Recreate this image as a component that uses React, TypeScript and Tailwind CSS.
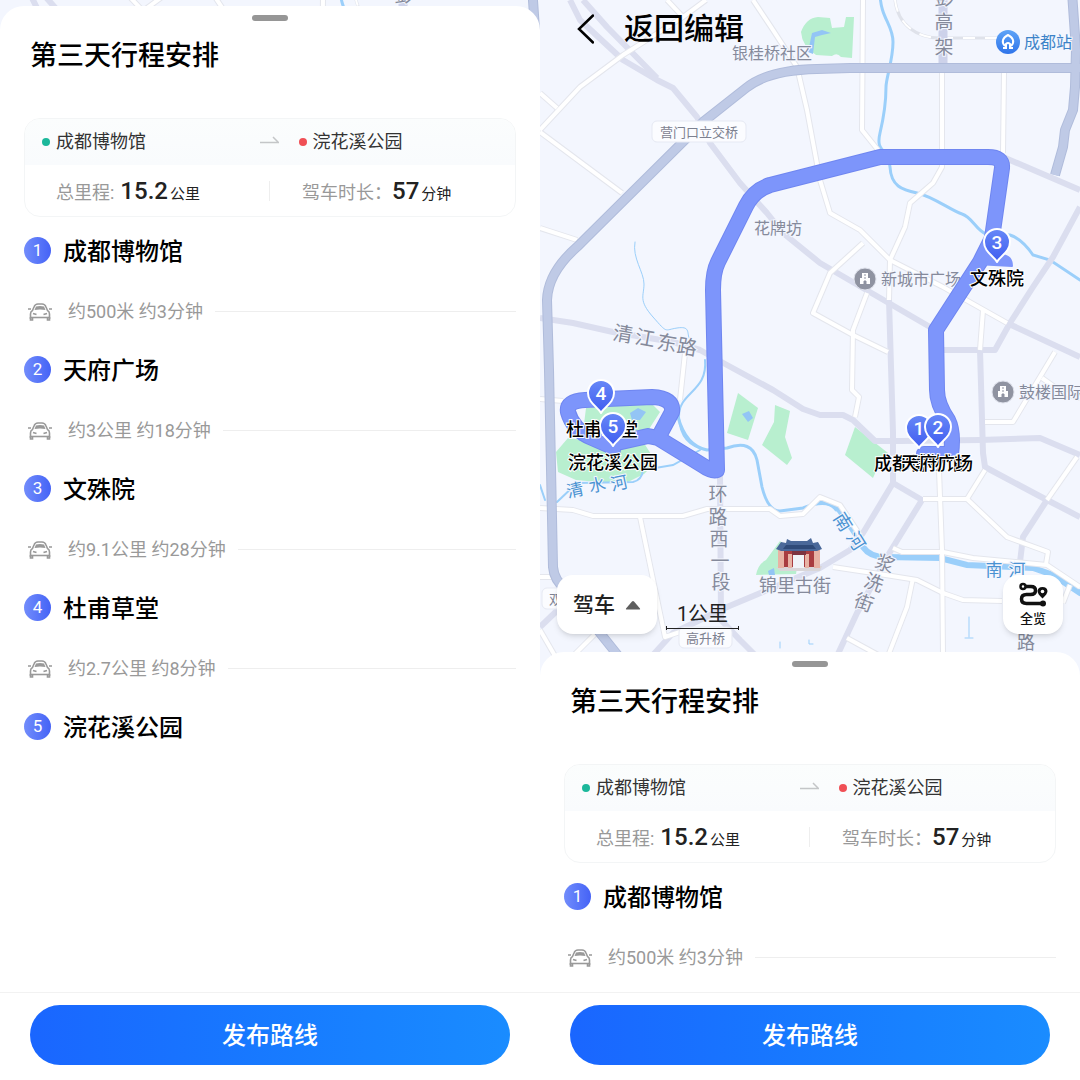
import { useState } from 'react';

type TGlyph = [char: string, x: number, y: number];

const stops = [
    { name: '成都博物馆', leg: '约500米 约3分钟' },
    { name: '天府广场', leg: '约3公里 约18分钟' },
    { name: '文殊院', leg: '约9.1公里 约28分钟' },
    { name: '杜甫草堂', leg: '约2.7公里 约8分钟' },
    { name: '浣花溪公园', leg: '' },
];

const parks = [
    'M261 32Q266 18 278 17L290 18 292 28 304 27 306 17 314 17 312 58 301 57Q297 52 292 56L276 55Q262 46 261 32Z',
    'M198 393L218 408 208 440 187 433Z',
    'M235 405L250 411 245 437 249 449 252 458 247 465 222 445 234 422Z',
    'M315 427L348 453 340 462 333 478 305 455Z',
    'M240 541L258 560 256 574 216 575Q218 564 226 560Z',
    'M46 408L70 404 112 404 120 412 102 440 116 462 104 474 84 484 58 482 36 480 18 472 16 452 28 438 42 440Z',
];

const ponds = [
    'M272 33L282 30 291 33 282 35 275 37 273 54 268 52Z',
    'M202 414L209 411 213 418 208 422 205 418Z',
    'M90 413L98 408 106 412 100 420 92 420Z',
    'M36 424L54 428 50 444 38 440Z',
    'M228 571L234 568 235 575 229 575Z',
];

const lavenderRoads = [
    'M30 0L40 20 83 60 117 80 133 88 157 117 170 143 200 183 227 213 243 233 280 263 347 302 390 327',
    'M43 0L67 27 117 78',
    'M0 318L33 323 73 332 133 342 160 350 187 365 233 390 263 409 280 415 303 415 313 420 335 441 360 441 440 440 500 438 540 455',
    'M349 300L353 433 353 483 323 533 310 550 280 568 187 607 133 633 112 656',
    'M353 483L382 500 350 552 317 613 297 656',
    'M403 350L455 350 470 323 493 287 513 257 540 207',
    'M463 157L540 190',
    'M440 350L443 453 445 467 507 500 540 517',
    'M507 500L483 537 480 562',
    'M467 323L540 357',
    'M180 473L181 620 200 640 216 656',
    'M0 627L24 604',
];

const whiteRoads = [
    'M0 130L40 87 83 55 143 17 166 0',
    'M127 0L143 17',
    'M213 0L233 30 257 67 267 110 280 180 290 213 320 230 350 260 403 287 467 323',
    'M0 93L17 108',
    'M0 132L82 193',
    'M0 228L37 240',
    'M323 0L322 130 338 150',
    'M323 243L290 273 273 313 313 335 348 352',
    'M402 72L402 167 393 183 370 203 365 227 350 260 349 300',
    'M464 72L463 153',
    'M327 293L313 330 312 390 319 397 315 417',
    'M443 310L440 350',
    'M515 352L473 422 445 422',
    'M502 378L523 393 540 398',
    'M0 399L23 401',
    'M145 353L140 400',
    'M0 508L33 510 53 516 143 516 167 509 230 509 240 516 263 514 280 497 300 505 320 535',
    'M100 517L125 637 140 632',
    'M0 577L14 577',
    'M0 630L15 656',
    'M33 656L57 632',
    'M383 499L427 499 445 470',
    'M427 499L467 537 508 552 506 564',
    'M399 470L402 550 403 656',
    'M353 548L362 552 403 552 433 558 507 565 540 587',
    'M293 567L333 573 377 580 403 593 423 600 462 601',
    'M373 578L367 607 348 656',
    'M307 638L340 656',
    'M507 500L537 457',
    'M530 585L523 603',
];

const rivers = [
    { d: 'M340 -8C340 18 353 24 353 42S346 78 346 87S345 112 340 133S349 148 350 167S362 190 377 193S412 211 422 214S436 230 446 234L470 235Q482 239 493 255L510 260 540 280', w: 3 },
    { d: 'M95 242C92 258 104 272 104 284S98 300 113 317S124 330 137 328S147 332 149 338', w: 1 },
    { d: 'M165 360C168 392 138 392 139 417S155 448 167 450', w: 2 },
    { d: 'M138 417Q146 446 167 450L187 448Q212 439 217 460L222 487Q228 511 240 511L263 508Q288 498 296 510', w: 3 },
    { d: 'M280 502Q294 502 301 514L323 547', w: 4 },
    { d: 'M323 547Q330 557 345 557L400 558 427 565 493 568 513 575 540 593', w: 6 },
    { d: 'M0 485L5 500', w: 2 },
    { d: 'M17 502L37 483 93 482Q102 480 103 470L133 465 160 450', w: 2 },
    { d: 'M429 617V637M425 638H433', w: 1 },
    { d: 'M240 642V648M269 640V644H273', w: 1 },
];

const ringRoads = [
    'M540 68L310 68 277 69Q228 70 206 88L163 122 47 237 38 246Q8 272 7 300L9 370 13 567Q14 580 26 590L60 633 80 658',
    'M532 -8L536 50 535 87 533 110 525 130 523 147 515 175',
];

const route =
    'M384 454L411 454Q414 432 408 420Q397 404 397 390L396 330L440 262L452 238L462 168Q463 157 448 157L340 157L230 185Q214 190 206 206L178 262Q173 272 173 290L177 470Q172 472 162 465L118 438L132 412Q134 398 112 397L45 400Q26 401 28 412Q33 430 52 438L68 445L108 436L118 438M73 444L73 450';

const MapLabel = ({
    glyphs,
    size = 16,
    angle = 0,
    water = false,
}: {
    glyphs: TGlyph[];
    size?: number;
    angle?: number;
    water?: boolean;
}) => (
    <g
        fontSize={size}
        textAnchor="middle"
        dominantBaseline="central"
        fill={water ? '#4a92d2' : '#858a9b'}
        stroke="#f3f6fe"
        strokeWidth="2"
        paintOrder="stroke"
    >
        {glyphs.map(([char, x, y]) => (
            <text key={char} x={x} y={y} transform={`rotate(${angle} ${x} ${y})`}>
                {char}
            </text>
        ))}
    </g>
);

const MapBadge = ({ x, y, width, label }: { x: number; y: number; width: number; label: string }) => (
    <g>
        <rect x={x} y={y} width={width} height="21" rx="5" fill="#fbfcff" stroke="#e6e9f3" />
        <text x={x + width / 2} y={y + 16} fontSize="13" textAnchor="middle" fill="#7d8190">
            {label}
        </text>
    </g>
);

const Pin = ({ x, y, n }: { x: number; y: number; n: number }) => (
    <g transform={`translate(${x} ${y})`}>
        <path
            d="M0 19C-3 13 -13 9 -13 -1A13 13 0 0 1 13 -1C13 9 3 13 0 19Z"
            fill="url(#pinFill)"
            stroke="#fff"
            strokeWidth="2"
            strokeLinejoin="round"
        />
        <text y="6" fontSize="19" fontWeight="500" textAnchor="middle" fill="#fff">
            {n}
        </text>
    </g>
);

const Building = ({ x, y }: { x: number; y: number }) => (
    <g transform={`translate(${x} ${y})`}>
        <circle r="11" fill="#8f93a1" stroke="#dfe2ec" />
        <path d="M-3 -6H3V-1H5V5H-5V-1H-3Z" fill="#fff" />
        <path d="M-1 -4H1M-1 -1H1M-1 5V2H1V5" stroke="#8f93a1" fill="#8f93a1" />
    </g>
);

// 锦里牌坊
const Gate = () => (
    <g>
        <path d="M236 567L282 566 280 571 240 571Z" fill="#d9d6d8" />
        <path d="M240 549H278V567H240Z" fill="#a93d40" />
        <path d="M253 555H264V568H253Z" fill="#f0f4f8" />
        <path d="M238 550H244V568H238ZM248 554H252V568H248ZM265 554H269V568H265ZM274 550H280V568H274Z" fill="#e8b3a4" />
        <path d="M236 549L241 542 246 543 247 539 251 541H267L271 538 273 543 278 542 282 549 277 551H241Z" fill="#4a6899" />
        <path d="M246 545H273L276 549H243Z" fill="#2f4a78" />
        <path d="M252 551H266V555H252Z" fill="#7d3440" />
    </g>
);

const MapPlaces = () => (
    <g>
        <MapLabel size={20} angle={10} glyphs={[['清', 83, 334], ['江', 105, 338], ['东', 127, 343], ['路', 147, 347]]} />
        <MapLabel size={19} glyphs={[['环', 178, 494], ['路', 178, 517], ['西', 179, 539], ['一', 180, 561], ['段', 181, 582]]} />
        <MapLabel size={19} angle={20} glyphs={[['浆', 345, 564], ['洗', 334, 583], ['街', 324, 603]]} />
        <MapLabel size={17} angle={-12} water glyphs={[['清', 35, 490], ['水', 57, 485], ['河', 79, 483]]} />
        <MapLabel size={18} angle={58} water glyphs={[['南', 303, 522], ['河', 316, 541]]} />
        <MapLabel size={17} water glyphs={[['南', 454, 570], ['河', 477, 570]]} />
        <MapLabel size={18} glyphs={[['路', 486, 642]]} />
        <g fontSize="16" fill="#858a9b" stroke="#f3f6fe" strokeWidth="2" paintOrder="stroke">
            <text x="192" y="59">银桂桥社区</text>
            <text x="214" y="234">花牌坊</text>
            <text x="341" y="285">新城市广场</text>
            <text x="479" y="398">鼓楼国际</text>
            <text x="219" y="592" fontSize="18">锦里古街</text>
            <text x="484" y="48" fill="#3c83c8">成都站</text>
        </g>
        <MapBadge x={112} y={121} width={94} label="营门口立交桥" />
        <MapBadge x={2} y={588} width={40} label="双楠" />
        <MapBadge x={139} y={627} width={53} label="高升桥" />
        <Building x={325} y={279} />
        <Building x={463} y={392} />
        <g transform="translate(468 42)">
            <circle r="12" fill="url(#stationFill)" />
            <path d="M-3 4Q-6 1 -5 -2Q-4 -5 0 -7Q4 -5 5 -2Q6 1 3 4M-5 6H-2V2Q0 0 2 2V6H5" fill="none" stroke="#fff" strokeWidth="2" />
        </g>
        <Gate />

        <path d={route} fill="none" stroke="#6f86f0" strokeWidth="16" strokeLinecap="round" strokeLinejoin="round" />
        <path d="M436 264L446 240 462 255Q472 256 472 266Z" fill="#7d95fb" stroke="#7d95fb" strokeWidth="2" strokeLinejoin="round" />
        <path d={route} fill="none" stroke="#7d95fb" strokeWidth="14" strokeLinecap="round" strokeLinejoin="round" />

        <g fontSize="18" fontWeight="500" fill="#000" stroke="#fff" strokeWidth="2" paintOrder="stroke">
            <text x="26" y="436">杜甫草堂</text>
            <text x="28" y="469">浣花溪公园</text>
            <text x="430" y="285">文殊院</text>
            <text x="334" y="470">成都博物馆</text>
            <text x="361" y="470">天府广场</text>
        </g>
        <Pin x={61} y={394} n={4} />
        <Pin x={73} y={427} n={5} />
        <Pin x={457} y={243} n={3} />
        <Pin x={379} y={429} n={1} />
        <Pin x={398} y={428} n={2} />
    </g>
);

const RouteMap = ({ top = 0, showPlaces = false }: { top?: number; showPlaces?: boolean }) => (
    <svg
        className="absolute inset-0 w-full h-full"
        viewBox={`0 ${top} 540 ${showPlaces ? 676 : 30}`}
        preserveAspectRatio="xMidYMin slice"
        aria-label="行程地图"
    >
        <defs>
            <linearGradient id="pinFill" x1="0" y1="0" x2="0" y2="1">
                <stop offset="0" stopColor="#6788f7" />
                <stop offset="1" stopColor="#3f5cf0" />
            </linearGradient>
            <linearGradient id="stationFill" x1="0" y1="0" x2="0" y2="1">
                <stop offset="0" stopColor="#5fa4f7" />
                <stop offset="1" stopColor="#2f74ea" />
            </linearGradient>
        </defs>
        <rect y="-10" width="540" height="700" fill="#f3f6fe" />
        <g fill="#b8efcf">
            {parks.map((d) => (
                <path key={d} d={d} />
            ))}
        </g>
        <g fill="#93c5f5">
            {ponds.map((d) => (
                <path key={d} d={d} />
            ))}
        </g>
        <g fill="none" stroke="#9bcffa" strokeLinecap="round">
            {rivers.map(({ d, w }) => (
                <path key={d} d={d} strokeWidth={w} />
            ))}
        </g>
        <g fill="none" strokeLinejoin="round">
            {lavenderRoads.map((d) => (
                <path key={d} d={d} stroke="#dbdeef" strokeWidth="6" />
            ))}
            {whiteRoads.map((d) => (
                <path key={d} d={d} stroke="#e4e6ed" strokeWidth="6" />
            ))}
            {whiteRoads.map((d) => (
                <path key={d} d={d} stroke="#fff" strokeWidth="4" />
            ))}
            <path d="M355 0C358 26 378 38 400 38H470" stroke="#dfe2ea" strokeWidth="3" />
            <path d="M355 0C358 26 378 38 400 38H470" stroke="#fff" strokeWidth="2" strokeDasharray="12 10" />
            <path d="M403 -8V68" stroke="#cdd2ea" strokeWidth="9" />
            {ringRoads.map((d) => (
                <path key={d} d={d} stroke="#b0bcdb" strokeWidth="10" />
            ))}
            {ringRoads.map((d) => (
                <path key={d} d={d} stroke="#bfcae6" strokeWidth="8" />
            ))}
        </g>
        <MapLabel size={19} glyphs={showPlaces ? [['彭', 404, -2], ['高', 404, 22], ['架', 404, 47]] : [['彭', 404, 1]]} />
        {showPlaces && <MapPlaces />}
    </svg>
);

const CarIcon = () => (
    <svg className="shrink-0" width="24" height="18" viewBox="0 0 24 18" fill="none" stroke="#999" strokeWidth="1.6">
        <path d="M2.5 16V11Q2.500 8.500 4.500 7.500L6 4Q7 1 10 1H14Q17 1 18 4L19.500 7.500Q21.500 8.500 21.500 11V16" />
        <path d="M2.500 14.500H21.500" />
        <path d="M2.500 14V17H4.500V15M21.500 14V17H19.500V15" />
        <path d="M6.500 7L8 3.500Q12 2.500 16 3.500L17.500 7Q12 6 6.500 7Z" fill="#999" stroke="none" />
        <path d="M5 10.500L8.500 11.500M19 10.500L15.500 11.500" strokeWidth="1.800" />
        <path d="M0 6H3M21 6H24" />
    </svg>
);

const SummaryCard = () => (
    <section className="mx-6 mt-[43px] rounded-2xl border border-[#f3f5f6] overflow-hidden">
        <div className="flex items-center h-[46px] text-[18px] leading-6 text-[#333] bg-gradient-to-b from-[#fbfdfd] to-[#f9fbfd]">
            <div className="flex-1 flex items-center gap-[6px] pl-[17px]">
                <span className="w-2 h-2 rounded-full bg-[#1cb89b]"></span>
                成都博物馆
            </div>
            <svg className="shrink-0" width="20" height="12" viewBox="0 0 20 12" fill="none" stroke="#c4c6c8" strokeWidth="1.500">
                <path d="M1 6.500H19.500L14 1" />
            </svg>
            <div className="flex-1 flex items-center gap-[6px] pl-5">
                <span className="w-2 h-2 rounded-full bg-[#f04f55]"></span>
                浣花溪公园
            </div>
        </div>
        <div className="flex items-center h-[51px] text-[#222]">
            <div className="flex-1 flex items-baseline pl-[31px]">
                <span className="text-[18px] leading-6 text-[#999]">总里程:</span>
                <span className="ml-[6px] text-[24px] leading-8 font-medium">15.2</span>
                <span className="ml-[2px] text-[15px]">公里</span>
            </div>
            <div className="w-px h-5 bg-[#eee]"></div>
            <div className="flex-1 flex items-baseline pl-8">
                <span className="text-[18px] leading-6 text-[#999]">驾车时长：</span>
                <span className="text-[24px] leading-8 font-medium">57</span>
                <span className="ml-[2px] text-[15px]">分钟</span>
            </div>
        </div>
    </section>
);

const Sheet = ({ count = stops.length }: { count?: number }) => (
    <div className="relative -mt-6 flex-1 min-h-0 overflow-hidden rounded-t-3xl bg-white">
        <div className="mx-auto mt-[9px] w-9 h-[6px] rounded-full bg-[#969696]"></div>
        <h1 className="mt-4 ml-[30px] text-[27px] leading-[38px] font-medium text-black">第三天行程安排</h1>
        <SummaryCard />
        <ol className="mt-[17px] mx-6">
            {stops.slice(0, count).map(({ name, leg }) => (
                <li key={name}>
                    <div className="flex items-start gap-3 h-9">
                        <span className="flex justify-center items-center mt-[3px] w-[27px] h-[27px] rounded-full bg-gradient-to-r from-[#728cfb] to-[#4562f6] text-[17px] text-white">
                            {stops.findIndex((stop) => stop.name === name) + 1}
                        </span>
                        <h2 className="text-[24px] leading-9 font-medium text-black">{name}</h2>
                    </div>
                    {leg && (
                        <div className="flex items-center h-[83px] pl-1 text-[18px] leading-6 text-[#999]">
                            <CarIcon />
                            <span className="ml-4">{leg}</span>
                            <span className="ml-3 flex-1 h-px bg-[#eee]"></span>
                        </div>
                    )}
                </li>
            ))}
        </ol>
    </div>
);

const PublishBar = () => (
    <footer className="shrink-0 border-t border-[#f2f2f2] bg-white px-[30px] pt-3 pb-[15px]">
        <button className="w-full h-[60px] pt-px rounded-full bg-gradient-to-r from-[#1a66ff] to-[#1a8cff] text-[24px] font-medium text-white">
            发布路线
        </button>
    </footer>
);

const MapControls = () => {
    const [mode, setMode] = useState('drive');

    return (
        <div className="absolute inset-x-[17px] bottom-[42px] flex items-end">
            <div className="relative flex items-center rounded-2xl bg-white shadow-md">
                <select
                    aria-label="出行方式"
                    value={mode}
                    onChange={(e) => setMode(e.target.value)}
                    className="appearance-none w-[100px] h-[59px] pt-[3px] pl-4 bg-transparent text-[21px] font-medium text-[#222] outline-none"
                >
                    <option value="drive">驾车</option>
                    <option value="walk">步行</option>
                </select>
                <svg className="absolute right-4 pointer-events-none" width="16" height="10" viewBox="0 0 16 10" fill="#5e5e5e">
                    <path d="M1 8.500L7 1.500Q8 0.500 9 1.500L15 8.500Q15.500 9.500 14.500 9.500H1.500Q0.500 9.500 1 8.500Z" />
                </svg>
            </div>
            <div className="ml-[9px] mb-1 w-[73px] text-center text-[20px] leading-6 text-[#222]">
                1公里
                <svg className="block w-full" width="73" height="4" viewBox="0 0 73 4" fill="none" stroke="#222">
                    <path d="M0.500 0V4M72.500 0V4M0 2.500H73" />
                </svg>
            </div>
            <button className="ml-auto flex flex-col items-center w-[60px] h-[59px] pt-[7px] rounded-2xl bg-white shadow-md text-[13px] leading-[18px] font-medium text-[#111]">
                <svg className="mb-[2px]" width="30" height="26" viewBox="0 0 30 26" fill="none" stroke="#111" strokeWidth="2.500">
                    <circle cx="5" cy="4.500" r="2.500" />
                    <path d="M8 4.500H13Q17.500 4.500 17.500 8.500Q17.500 12.500 12.500 12.500H8.500Q3.500 12.500 3.500 17Q3.500 21.500 8.500 21.500H24" strokeWidth="3.500" />
                    <circle cx="25" cy="21.500" r="3" fill="#111" stroke="none" />
                    <path d="M24.500 16.500Q19.500 12 19.500 9Q20 5 24.500 5Q29 5 29.500 9Q29.500 12 24.500 16.500Z" fill="#111" stroke="none" />
                    <circle cx="24.500" cy="9.500" r="1.800" fill="#fff" stroke="none" />
                </svg>
                全览
            </button>
        </div>
    );
};

const App = () => {
    return (
        <div
            lang="zh-CN"
            className="grid grid-cols-2 h-screen overflow-hidden bg-white font-[Roboto,'Noto_Sans_CJK_SC',sans-serif]"
        >
            <main className="flex flex-col min-h-0">
                <div className="relative shrink-0 h-[30px]">
                    <RouteMap top={6} />
                </div>
                <Sheet />
                <PublishBar />
            </main>
            <main className="flex flex-col min-h-0">
                <div className="relative shrink-0 h-[676px]">
                    <RouteMap showPlaces />
                    <button className="relative flex items-center gap-[30px] pl-9 pt-[9px] text-[30px] leading-10 font-medium text-black">
                        <svg width="18" height="30" viewBox="0 0 18 30" fill="none" stroke="#000" strokeWidth="2.500" strokeLinecap="round">
                            <path d="M17 1.500L3 15L17 28.500" />
                        </svg>
                        返回编辑
                    </button>
                    <MapControls />
                </div>
                <Sheet count={1} />
                <PublishBar />
            </main>
        </div>
    );
};

export default App;
